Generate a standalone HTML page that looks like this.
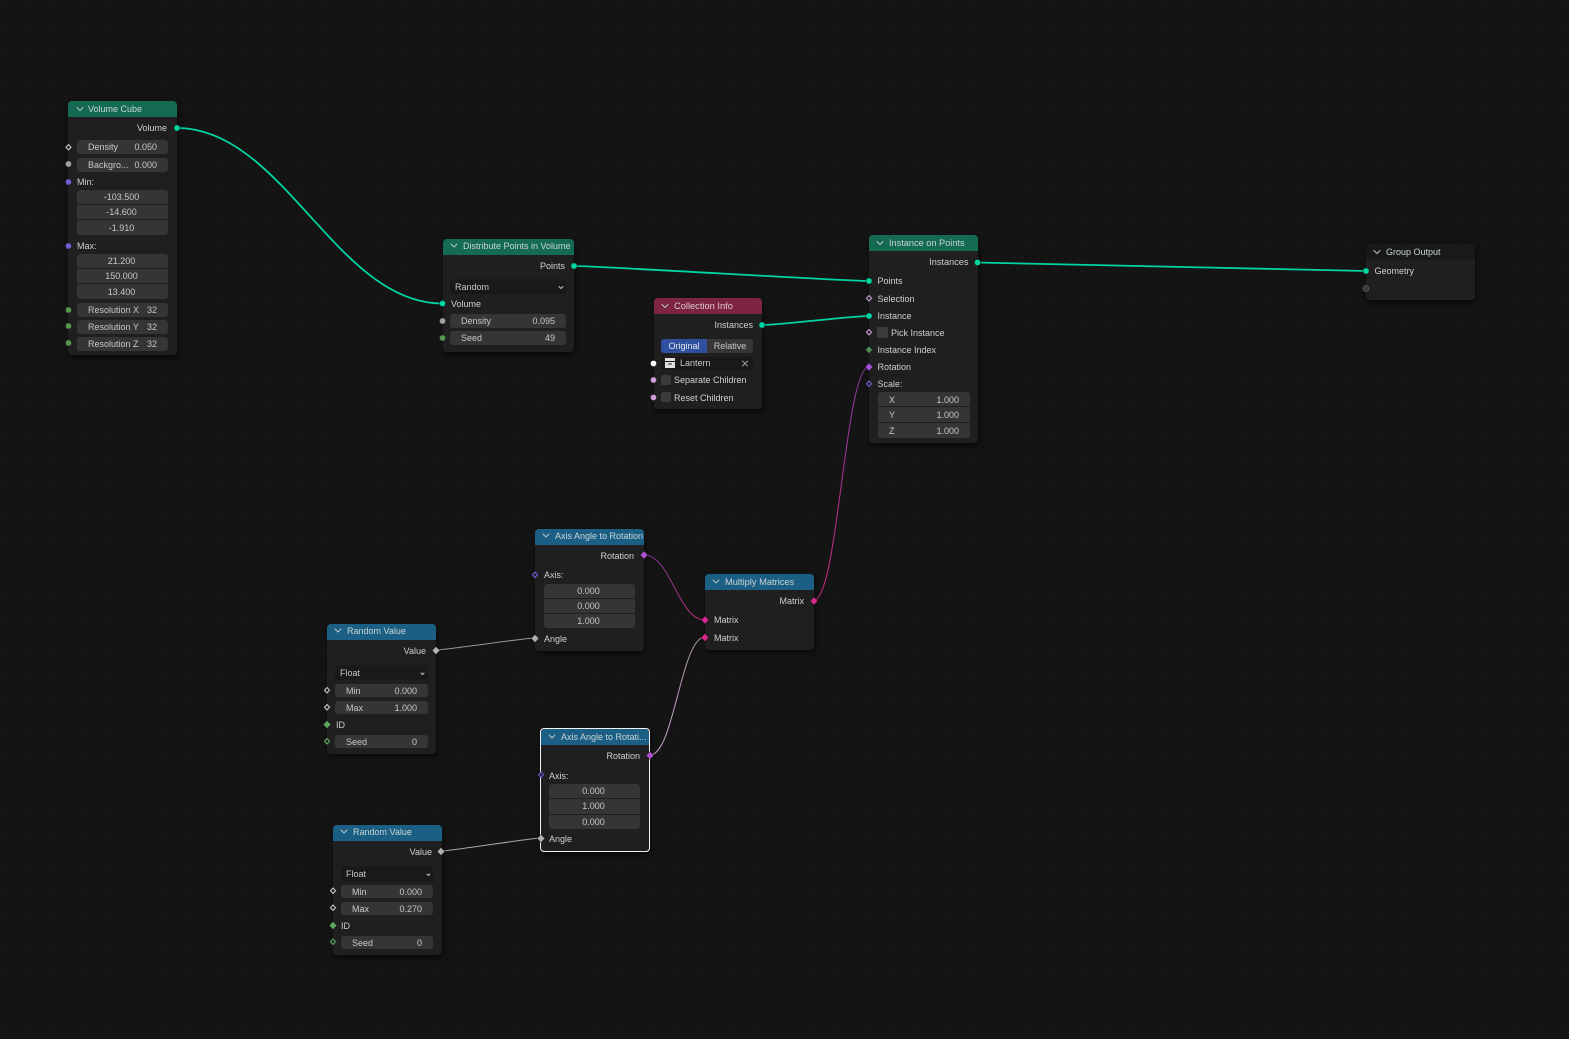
<!DOCTYPE html>
<html><head><meta charset="utf-8"><style>
html,body{margin:0;padding:0;background:#141414}
body{position:relative;width:1569px;height:1039px;overflow:hidden;font-family:"Liberation Sans",sans-serif;font-size:9px;color:#d0d0d0;
background-color:#141414;background-image:radial-gradient(circle at 1px 1px,#181818 1px,transparent 1.2px);background-size:27px 27px}
.n{position:absolute;background:#1f1f1f;border-radius:4px;box-shadow:1px 3px 6px rgba(0,0,0,.55)}
.h{position:absolute;left:0;top:0;right:0;height:16px;border-radius:4px 4px 0 0;color:#c8d4d6;line-height:16px;padding-left:20px;white-space:nowrap;overflow:hidden}
.g{background:#146a53}.b{background:#1c5f84}.r{background:#7c2442}.k{background:#191919}
.t{position:absolute;line-height:12px;white-space:nowrap}
.f{position:absolute;box-sizing:border-box;background:#353535;border-radius:3px;display:flex;justify-content:space-between;align-items:center;padding:0 11px;white-space:nowrap;color:#c8c8c8}
.c{justify-content:center;padding:0 2px 1px 0}
.p{padding:0 2px 0 0}
.d{position:absolute;box-sizing:border-box;background:#191919;border-radius:3px;padding:0 5px;display:flex;justify-content:space-between;align-items:center;color:#c8c8c8}
.x{position:absolute;background:#3b3b3b;border-radius:2px}
svg.o{position:absolute;left:0;top:0}
</style></head><body>
<svg class="o" width="1569" height="1039" fill="none">
<defs>
<linearGradient id="a1" gradientUnits="userSpaceOnUse" x1="644" y1="555" x2="705" y2="620"><stop offset="0" stop-color="#7a3b96"/><stop offset="1" stop-color="#c2287f"/></linearGradient>
<linearGradient id="a2" gradientUnits="userSpaceOnUse" x1="650" y1="755" x2="705" y2="637"><stop offset="0" stop-color="#cfa8d8"/><stop offset="1" stop-color="#a88ea0"/></linearGradient>
<linearGradient id="a3" gradientUnits="userSpaceOnUse" x1="814" y1="600" x2="869" y2="367"><stop offset="0" stop-color="#d0287f"/><stop offset="1" stop-color="#8c3aa8"/></linearGradient>
</defs>
<g stroke="#00d4a0" stroke-width="1.8">
<path d="M177 128C283 128 336 303 442 303.500"/>
<path d="M574 266C600 266 843 281 869 281"/>
<path d="M762 325C780 325 851 316 869 316"/>
<path d="M977 262.500C1000 262.500 1343 271 1366 271"/>
</g>
<path d="M644 555C671 555 678 620 705 620" stroke="url(#a1)" stroke-width="1"/>
<path d="M650 755C674 755 681 637 705 637" stroke="url(#a2)" stroke-width="1"/>
<path d="M814 600C838 600 845 367 869 367" stroke="url(#a3)" stroke-width="1"/>
<path d="M436 650C446 650 525 638 535 638" stroke="#989898" stroke-width="1"/>
<path d="M441 851C451 851 531 838 541 838" stroke="#a8a8a8" stroke-width="1"/>
</svg>

<!-- Volume Cube -->
<div class="n" style="left:68px;top:101px;width:109px;height:254px"><div class="h g">Volume Cube</div></div>
<div class="t" style="right:1402px;top:122px">Volume</div>
<div class="f" style="left:77px;top:140px;width:91px;height:14px"><span>Density</span><span>0.050</span></div>
<div class="f" style="left:77px;top:158px;width:91px;height:14px"><span>Backgro...</span><span>0.000</span></div>
<div class="t" style="left:77px;top:176px">Min:</div>
<div class="f c" style="left:77px;top:190px;width:91px;height:14px;border-radius:3px 3px 0 0">-103.500</div>
<div class="f c" style="left:77px;top:205px;width:91px;height:14px;border-radius:0">-14.600</div>
<div class="f c p" style="left:77px;top:220px;width:91px;height:15px;border-radius:0 0 3px 3px">-1.910</div>
<div class="t" style="left:77px;top:240px">Max:</div>
<div class="f c" style="left:77px;top:254px;width:91px;height:14px;border-radius:3px 3px 0 0">21.200</div>
<div class="f c" style="left:77px;top:269px;width:91px;height:14px;border-radius:0">150.000</div>
<div class="f c p" style="left:77px;top:284px;width:91px;height:15px;border-radius:0 0 3px 3px">13.400</div>
<div class="f" style="left:77px;top:303px;width:91px;height:14px"><span>Resolution X</span><span>32</span></div>
<div class="f" style="left:77px;top:320px;width:91px;height:14px"><span>Resolution Y</span><span>32</span></div>
<div class="f" style="left:77px;top:337px;width:91px;height:14px"><span>Resolution Z</span><span>32</span></div>

<!-- Distribute -->
<div class="n" style="left:443px;top:239px;width:131px;height:113px"><div class="h g" style="line-height:15px">Distribute Points in Volume</div></div>
<div class="t" style="right:1004px;top:260px">Points</div>
<div class="d" style="left:450px;top:279px;width:117px;height:15px"><span>Random</span></div>
<div class="t" style="left:451px;top:298px">Volume</div>
<div class="f" style="left:450px;top:314px;width:116px;height:14px"><span>Density</span><span>0.095</span></div>
<div class="f" style="left:450px;top:331px;width:116px;height:14px"><span>Seed</span><span>49</span></div>

<!-- Collection -->
<div class="n" style="left:654px;top:298px;width:108px;height:111px"><div class="h r" style="color:#dcccd2;font-size:9.300px">Collection Info</div></div>
<div class="t" style="right:816px;top:319px">Instances</div>
<div class="f c" style="left:661px;top:339px;width:46px;height:14px;padding:0;background:#2f4f9f;border-radius:3px 0 0 3px;color:#e4e8f0">Original</div>
<div class="f c" style="left:707px;top:339px;width:46px;height:14px;padding:0;background:#363636;border-radius:0 3px 3px 0">Relative</div>
<div class="d" style="left:661px;top:357px;width:92px;height:13px;padding-left:19px;padding-bottom:1px"><span>Lantern</span></div>
<div class="x" style="left:661px;top:375px;width:10px;height:10px"></div>
<div class="t" style="left:674px;top:374px">Separate Children</div>
<div class="x" style="left:661px;top:392px;width:10px;height:10px"></div>
<div class="t" style="left:674px;top:392px">Reset Children</div>

<!-- Instance on Points -->
<div class="n" style="left:869px;top:235px;width:108.500px;height:207.500px"><div class="h g" style="font-size:9.200px">Instance on Points</div></div>
<div class="t" style="right:600.500px;top:256px;font-size:9.200px">Instances</div>
<div class="t" style="left:877.500px;top:275px">Points</div>
<div class="t" style="left:877.500px;top:293px">Selection</div>
<div class="t" style="left:877.500px;top:310px">Instance</div>
<div class="x" style="left:877px;top:327px;width:11px;height:11px"></div>
<div class="t" style="left:891px;top:327px">Pick Instance</div>
<div class="t" style="left:877.500px;top:344px">Instance Index</div>
<div class="t" style="left:877.500px;top:361px">Rotation</div>
<div class="t" style="left:877.500px;top:378px">Scale:</div>
<div class="f" style="left:878px;top:392px;width:92px;height:14px;padding-top:1px;border-radius:3px 3px 0 0"><span>X</span><span>1.000</span></div>
<div class="f" style="left:878px;top:407px;width:92px;height:15px;border-radius:0"><span>Y</span><span>1.000</span></div>
<div class="f" style="left:878px;top:423px;width:92px;height:15px;border-radius:0 0 3px 3px"><span>Z</span><span>1.000</span></div>

<!-- Group Output -->
<div class="n" style="left:1366px;top:244px;width:108.500px;height:56px"><div class="h k">Group Output</div></div>
<div class="t" style="left:1374.500px;top:265px">Geometry</div>

<!-- Axis Angle 1 -->
<div class="n" style="left:535px;top:529px;width:108.500px;height:121.500px"><div class="h b" style="line-height:15px">Axis Angle to Rotation</div></div>
<div class="t" style="right:935px;top:550px">Rotation</div>
<div class="t" style="left:544px;top:569px">Axis:</div>
<div class="f c p" style="left:544px;top:584px;width:91px;height:13.500px;border-radius:3px 3px 0 0">0.000</div>
<div class="f c p" style="left:544px;top:599px;width:91px;height:13.500px;border-radius:0">0.000</div>
<div class="f c" style="left:544px;top:614px;width:91px;height:14px;border-radius:0 0 3px 3px">1.000</div>
<div class="t" style="left:544px;top:633px">Angle</div>

<!-- Multiply -->
<div class="n" style="left:705px;top:574px;width:108.500px;height:75.500px"><div class="h b" style="font-size:9.300px">Multiply Matrices</div></div>
<div class="t" style="right:765px;top:595px">Matrix</div>
<div class="t" style="left:714px;top:614px">Matrix</div>
<div class="t" style="left:714px;top:632px">Matrix</div>

<!-- Random Value 1 -->
<div class="n" style="left:327px;top:624px;width:108.500px;height:129.500px"><div class="h b" style="line-height:15px">Random Value</div></div>
<div class="t" style="right:1143px;top:645px">Value</div>
<div class="d" style="left:335px;top:665px;width:93px;height:15px"><span>Float</span></div>
<div class="f" style="left:335px;top:684px;width:93px;height:13px"><span>Min</span><span>0.000</span></div>
<div class="f" style="left:335px;top:701px;width:93px;height:13px"><span>Max</span><span>1.000</span></div>
<div class="t" style="left:336px;top:719px">ID</div>
<div class="f" style="left:335px;top:735px;width:93px;height:13px"><span>Seed</span><span>0</span></div>

<!-- Random Value 2 -->
<div class="n" style="left:333px;top:825px;width:108.500px;height:129.500px"><div class="h b" style="line-height:15px">Random Value</div></div>
<div class="t" style="right:1137px;top:846px">Value</div>
<div class="d" style="left:341px;top:866px;width:92px;height:15px"><span>Float</span></div>
<div class="f" style="left:341px;top:885px;width:92px;height:13px"><span>Min</span><span>0.000</span></div>
<div class="f" style="left:341px;top:902px;width:92px;height:13px"><span>Max</span><span>0.270</span></div>
<div class="t" style="left:341px;top:920px">ID</div>
<div class="f" style="left:341px;top:936px;width:92px;height:13px"><span>Seed</span><span>0</span></div>

<!-- Axis Angle 2 (selected) -->
<div class="n" style="left:540px;top:728px;width:109.500px;height:123.500px;outline:1px solid #f2f2f2;outline-offset:-1px"><div class="h b" style="left:1px;top:1px;right:1px">Axis Angle to Rotati...</div></div>
<div class="t" style="right:929px;top:750px">Rotation</div>
<div class="t" style="left:549px;top:770px">Axis:</div>
<div class="f c p" style="left:549px;top:784px;width:91px;height:13.500px;border-radius:3px 3px 0 0">0.000</div>
<div class="f c" style="left:549px;top:799px;width:91px;height:14.500px;border-radius:0">1.000</div>
<div class="f c" style="left:549px;top:815px;width:91px;height:14px;border-radius:0 0 3px 3px">0.000</div>
<div class="t" style="left:549px;top:833px">Angle</div>

<!-- overlay: chevrons, icons, sockets -->
<svg class="o" width="1569" height="1039" fill="none">
<g stroke="#b8c6c8" stroke-width="1" stroke-linecap="round" stroke-linejoin="round">
<path d="M77 107.500l3 3 3-3"/><path d="M451 244l3 3 3-3"/><path d="M662 304.500l3 3 3-3"/><path d="M877 241.500l3 3 3-3"/><path d="M1374 250.500l3 3 3-3"/><path d="M543 534l3 3 3-3"/><path d="M713 580l3 3 3-3"/><path d="M335 629l3 3 3-3"/><path d="M341 830l3 3 3-3"/><path d="M549 735l3 3 3-3"/>
<path d="M559 286.500l2 2 2-2"/><path d="M421 673l1.500 1.500 1.500-1.500"/><path d="M427 874l1.500 1.500 1.500-1.500"/>
<path d="M742.500 361l5 5M747.500 361l-5 5" stroke="#999"/>
</g>
<path d="M665 358h10v3h-10zM665 362h10v6h-10z" fill="#e0e0e0"/><path d="M668 364h4" stroke="#222"/>
<g stroke="#141414" stroke-width=".5">
<circle cx="177" cy="128" r="3.100" fill="#00d6a3"/><circle cx="574" cy="266" r="3.100" fill="#00d6a3"/><circle cx="442.500" cy="303.500" r="3.100" fill="#00d6a3"/><circle cx="762" cy="325" r="3.100" fill="#00d6a3"/><circle cx="869" cy="281" r="3.100" fill="#00d6a3"/><circle cx="869" cy="316" r="3.100" fill="#00d6a3"/><circle cx="977.500" cy="262.500" r="3.100" fill="#00d6a3"/><circle cx="1366" cy="271" r="3.100" fill="#00d6a3"/>
<circle cx="68.500" cy="164" r="3.100" fill="#a0a0a0"/><circle cx="442.500" cy="321" r="3.100" fill="#a0a0a0"/>
<circle cx="68.500" cy="182" r="3.100" fill="#6c60cc"/><circle cx="68.500" cy="246" r="3.100" fill="#6c60cc"/>
<circle cx="68.500" cy="310" r="3.100" fill="#58954f"/><circle cx="68.500" cy="326" r="3.100" fill="#58954f"/><circle cx="68.500" cy="343" r="3.100" fill="#58954f"/><circle cx="442.500" cy="338" r="3.100" fill="#58954f"/>
<circle cx="653.500" cy="363.500" r="3.100" fill="#fff"/><circle cx="653.500" cy="380" r="3.100" fill="#cc9cd8"/><circle cx="653.500" cy="397.500" r="3.100" fill="#cc9cd8"/>
<circle cx="1366" cy="288.500" r="3" fill="#3a3a3a" stroke="#808080"/>
<!-- filled diamonds -->
<path d="M869 346l3.600 3.800-3.600 3.800-3.600-3.800z" fill="#4c8a52"/>
<path d="M869 363l3.800 4-3.800 4-3.800-4z" fill="#a24ed8"/>
<path d="M644 551l3.800 4-3.800 4-3.800-4z" fill="#ae52d0"/>
<path d="M650 751.500l3.800 4-3.800 4-3.800-4z" fill="#ae52d0"/>
<path d="M814 597l3.800 4-3.800 4-3.800-4z" fill="#d4288c"/>
<path d="M705 616l3.800 4-3.800 4-3.800-4z" fill="#d4288c"/>
<path d="M705 633.500l3.800 4-3.800 4-3.800-4z" fill="#d4288c"/>
<path d="M535 634.500l3.800 4-3.800 4-3.800-4z" fill="#b0b0b0"/>
<path d="M541 834.500l3.800 4-3.800 4-3.800-4z" fill="#b0b0b0"/>
<path d="M436 646.500l3.800 4-3.800 4-3.800-4z" fill="#b0b0b0"/>
<path d="M441 847.500l3.800 4-3.800 4-3.800-4z" fill="#b0b0b0"/>
<path d="M327 720.500l3.800 4-3.800 4-3.800-4z" fill="#58a860"/>
<path d="M333 921.500l3.800 4-3.800 4-3.800-4z" fill="#58a860"/>
</g>
<!-- hollow diamonds -->
<g fill="#1a1a1a" stroke-width="1.100">
<g stroke="#c4c4c4">
<path d="M68.500 144.500l2.500 2.700-2.500 2.700-2.500-2.700z"/><path d="M327 687.500l2.500 2.700-2.500 2.700-2.500-2.700z"/><path d="M327 704.500l2.500 2.700-2.500 2.700-2.500-2.700z"/><path d="M333 888l2.500 2.700-2.500 2.700-2.500-2.700z"/><path d="M333 905l2.500 2.700-2.500 2.700-2.500-2.700z"/>
</g>
<g stroke="#c8a0d0"><path d="M869 295.500l2.500 2.700-2.500 2.700-2.500-2.700z"/><path d="M869 329.500l2.500 2.700-2.500 2.700-2.500-2.700z"/></g>
<g stroke="#6c60d8"><path d="M869 381l2.500 2.700-2.500 2.700-2.500-2.700z"/><path d="M535 572l2.500 2.700-2.500 2.700-2.500-2.700z"/><path d="M541 772l2.500 2.700-2.500 2.700-2.500-2.700z"/></g>
<g stroke="#58a860"><path d="M327 738.500l2.500 2.700-2.500 2.700-2.500-2.700z"/><path d="M333 939l2.500 2.700-2.500 2.700-2.500-2.700z"/></g>
</g>
</svg>
</body></html>
